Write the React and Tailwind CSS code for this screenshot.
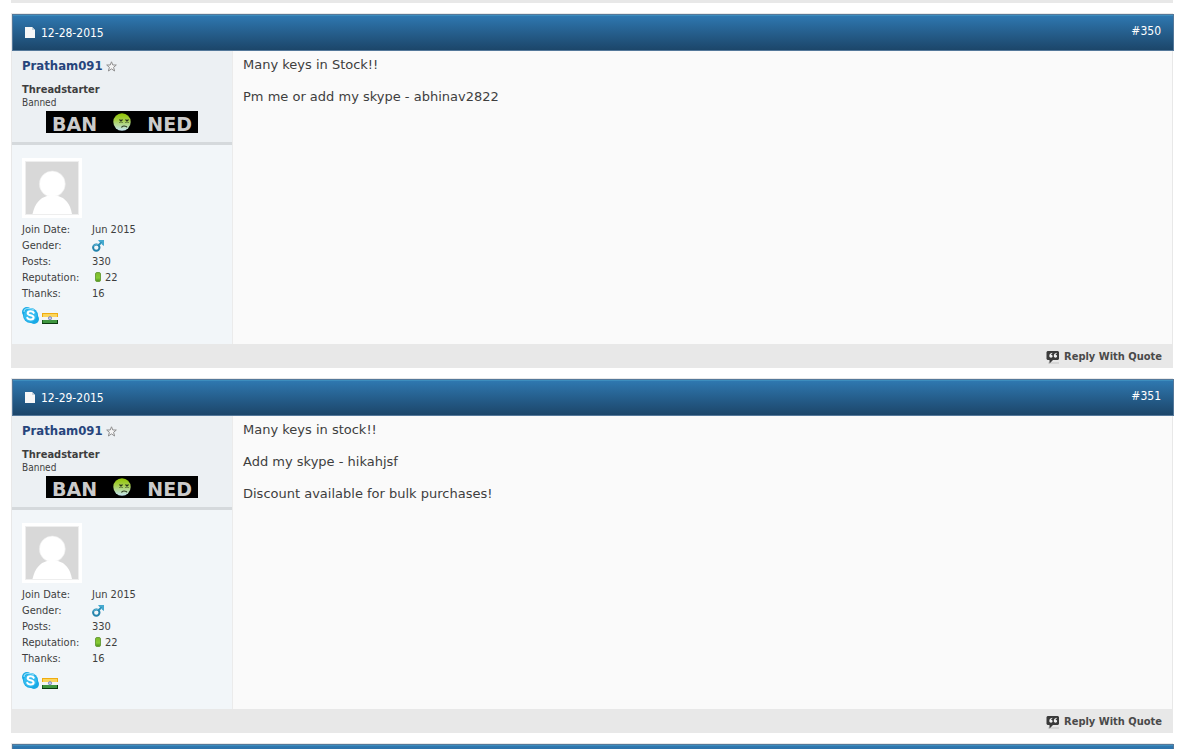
import React from "react";

const posts = [
  {
    id: 350,
    date: "12-28-2015",
    lines: ["Many keys in Stock!!", "Pm me or add my skype - abhinav2822"],
  },
  {
    id: 351,
    date: "12-29-2015",
    lines: [
      "Many keys in stock!!",
      "Add my skype - hikahjsf",
      "Discount available for bulk purchases!",
    ],
  },
];

function PageIcon() {
  return (
    <svg width="10" height="12" viewBox="0 0 10 12" aria-hidden="true">
      <path d="M0 0h7l3 3v8H0z" fill="#f7f7f7" />
      <path d="M7 0l3 3H7z" fill="#c9d3dc" />
    </svg>
  );
}

function StarIcon() {
  return (
    <svg width="11" height="11" viewBox="0 0 11 11" aria-hidden="true">
      <path
        d="M5.5 .8L6.8 4H10.3L7.6 6.3L8.6 10L5.5 7.9L2.4 10L3.4 6.3L.7 4H4.2Z"
        fill="#f4f4f4"
        stroke="#8f8f8f"
        strokeWidth="1"
      />
    </svg>
  );
}

function SickFace() {
  return (
    <svg width="18" height="18" viewBox="0 0 18 18" aria-hidden="true">
      <defs>
        <linearGradient id="sick" x1="0" y1="0" x2="0" y2="1">
          <stop offset="0" stopColor="#8fc400" />
          <stop offset=".4" stopColor="#a6cf4a" />
          <stop offset="1" stopColor="#c3e3f2" />
        </linearGradient>
      </defs>
      <circle cx="9" cy="9" r="8.7" fill="url(#sick)" />
      <path
        d="M6.500 6.500l3 3m0-3l-3 3M12.500 6.500l3 3m0-3l-3 3"
        fill="none"
        stroke="#26331a"
        strokeWidth="1.1"
      />
      <path
        d="M8.500 14.500Q9 13 11 13Q13.500 13 14 14.300"
        fill="none"
        stroke="#26331a"
        strokeWidth="1.1"
      />
    </svg>
  );
}

function Avatar() {
  return (
    <svg
      width="60"
      height="60"
      viewBox="0 0 60 60"
      role="img"
      aria-label="Avatar"
      className="block"
    >
      <rect width="60" height="60" fill="#fff" />
      <rect x="3" y="3" width="54" height="54" fill="#eee" />
      <rect x="4" y="4" width="52" height="52" fill="#d8d8d8" />
      <circle cx="30.3" cy="26" r="13" fill="#fff" stroke="#eaeaea" strokeWidth=".6" />
      <path d="M10.500 56C13 45 18 40 25 38H36C43 40 48 45 50 56Z" fill="#fff" />
    </svg>
  );
}

function MaleIcon() {
  return (
    <svg width="12" height="12" viewBox="0 0 12 12" role="img" aria-label="Male">
      <circle cx="4.3" cy="7.600" r="3.200" fill="none" stroke="#2383ab" strokeWidth="2" />
      <path d="M1.500 6.300a3.200 3.200 0 0 1 4.500-1.500" fill="none" stroke="#62bbdc" strokeWidth="1" />
      <path d="M6.500 5.300L10 1.800" stroke="#2b91ba" strokeWidth="2" />
      <path d="M6 0H12V6L9.800 4.500V2H7.500Z" fill="#46a9cf" />
    </svg>
  );
}

function ReputationPip() {
  return (
    <svg width="6" height="10" viewBox="0 0 6 10" aria-hidden="true">
      <defs>
        <linearGradient id="pip" x1="0" y1="0" x2="0" y2="1">
          <stop offset="0" stopColor="#7db82c" />
          <stop offset=".6" stopColor="#86cc35" />
          <stop offset="1" stopColor="#4c8d20" />
        </linearGradient>
      </defs>
      <rect x=".5" y=".5" width="5" height="9" rx="1.500" fill="url(#pip)" stroke="#6da13f" />
    </svg>
  );
}

function SkypeIcon() {
  return (
    <svg width="17" height="17" viewBox="0 0 17 17" aria-hidden="true">
      <circle cx="5" cy="5" r="5" fill="#19a9e5" />
      <circle cx="12" cy="12" r="5" fill="#19a9e5" />
      <circle cx="8.500" cy="8.500" r="7.500" fill="#19a9e5" />
      <circle cx="8.300" cy="8.300" r="6.500" fill="#35bcf0" />
      <path d="M2 5Q2 2 5 1.500Q9 1 12 3" fill="none" stroke="#8bdcf8" strokeWidth="1.200" />
      <path
        d="M11.700 5.800C10.800 3.800 5.700 3.700 5.700 6.300C5.700 8.900 11.600 7.500 11.600 10.500C11.600 13.200 6 13 5.300 10.800"
        fill="none"
        stroke="#fff"
        strokeWidth="2.100"
        strokeLinecap="round"
      />
    </svg>
  );
}

function IndiaFlag() {
  return (
    <svg width="16" height="11" viewBox="0 0 16 11" role="img" aria-label="India">
      <rect width="16" height="4" fill="#f0ac10" />
      <rect x="1" y="1" width="14" height="3" fill="#fbd55c" />
      <rect y="4" width="16" height="3" fill="#f4f4f4" />
      <rect y="7" width="16" height="4" fill="#1c5c1e" />
      <rect x="1" y="7" width="14" height="3" fill="#3f963f" />
      <path d="M15 7h1v4H0v-1h15z" fill="#0c3a0f" />
      <circle cx="8" cy="5.200" r="1.600" fill="#c5c9e6" stroke="#7b84bb" strokeWidth=".9" />
    </svg>
  );
}

function QuoteIcon() {
  return (
    <svg width="14" height="13" viewBox="0 0 14 13" aria-hidden="true">
      <path d="M2 11.500h11v1H2z" fill="#c4c4c4" />
      <path d="M1.500 0H12L13 1V8L12 9H7L3.500 12.500V9H1.500L.5 8V1Z" fill="#3b3b3b" />
      <path
        d="M6.300 1.700C4.300 2 3.300 3.300 3.300 5C3.300 7.200 6.600 7.200 6.600 5.300C6.600 4.300 5.900 3.900 5.100 4Q5.300 3 6.300 2.600ZM10.800 1.700C8.800 2 7.800 3.300 7.800 5C7.800 7.200 11.100 7.200 11.100 5.300C11.100 4.300 10.400 3.900 9.600 4Q9.800 3 10.800 2.600Z"
        fill="#f2f2f2"
      />
    </svg>
  );
}

function PostHeader({ post }) {
  return (
    <div className="-mr-[2px] flex h-[37px] justify-between border border-[#54789a] bg-linear-to-b from-[#2f79b2] to-[#1c466a] px-3 text-[12px] leading-[16px] text-white shadow-[inset_0_1px_0_#3d8dbd]">
      {post && (
        <>
          <div className="flex items-center gap-[6px]">
            <PageIcon />
            <span>{post.date}</span>
          </div>
          <a href={"#post" + post.id} className="pt-2">
            #{post.id}
          </a>
        </>
      )}
    </div>
  );
}

function UserInfo() {
  return (
    <div className="w-[221px] shrink-0 border-r border-[#ebebeb] bg-[#f2f6f9]">
      <div className="h-[94px] border-b-[3px] border-[#d5d9dc] bg-[#ecf0f3] px-[10px] pt-[7px]">
        <div className="flex items-center gap-[3px]">
          <a
            href="#user"
            className="text-[13px] leading-[16px] font-bold text-[#27457c]"
          >
            Pratham091
          </a>
          <StarIcon />
        </div>
        <div className="mt-[9px] text-[11px] leading-[13px] font-bold">Threadstarter</div>
        <div className="text-[10px] leading-[13px]">Banned</div>
        {/* rank banner */}
        <div className="mx-auto mt-[2px] flex h-[22px] w-[152px] items-center justify-between bg-black px-[6px] font-['DejaVu_Sans',Verdana,sans-serif] text-[19px] leading-[22px] font-bold text-[#cbcbcb]">
          <span className="pt-1">BAN</span>
          <SickFace />
          <span className="pt-1">NED</span>
        </div>
      </div>

      <div className="px-[10px] pt-[13px] pb-[19px]">
        <a href="#user" className="block w-[60px]">
          <Avatar />
        </a>
        <dl className="mt-1 grid grid-cols-[70px_1fr] text-[11px] leading-[16px]">
          <dt>Join Date:</dt>
          <dd>Jun 2015</dd>
          <dt>Gender:</dt>
          <dd className="flex items-center">
            <MaleIcon />
          </dd>
          <dt>Posts:</dt>
          <dd>330</dd>
          <dt>Reputation:</dt>
          <dd className="flex items-start gap-1 pl-[3px]">
            <span className="pt-[2px]">
              <ReputationPip />
            </span>
            22
          </dd>
          <dt>Thanks:</dt>
          <dd>16</dd>
        </dl>
        <div className="mt-[5px] flex items-end gap-[3px]">
          <a href="#skype" aria-label="Skype">
            <SkypeIcon />
          </a>
          <IndiaFlag />
        </div>
      </div>
    </div>
  );
}

function Post({ post }) {
  return (
    <li className="border border-b-0 border-[#e8e8e8] bg-[#fafafa]">
      <PostHeader post={post} />
      <div className="flex min-h-[293px]">
        <UserInfo />
        <div className="flex flex-1 flex-col gap-4 px-[10px] pt-[6px] font-['DejaVu_Sans',Verdana,sans-serif] text-[13px] leading-[16px]">
          {post.lines.map((line) => (
            <p key={line}>{line}</p>
          ))}
        </div>
      </div>
      <div className="flex h-6 items-end justify-end bg-[#e8e8e8] px-[10px] pb-[3px]">
        <a
          href="#reply"
          className="flex items-center gap-1 text-[11px] leading-[16px] font-bold text-[#4a4a4a]"
        >
          <QuoteIcon />
          Reply With Quote
        </a>
      </div>
    </li>
  );
}

export default function App() {
  return (
    <div className="h-screen overflow-hidden bg-white pr-3 pl-[11px] font-['DejaVu_Sans_Condensed','DejaVu_Sans',Tahoma,sans-serif] text-[#3e3e3e] [&_svg]:block [&_svg]:shrink-0">
      <div className="mb-[10px] h-[3px] bg-[#e8e8e8]" />
      <ol className="flex flex-col gap-[10px]">
        {posts.map((post) => (
          <Post key={post.id} post={post} />
        ))}
        <li className="border border-[#e8e8e8]">
          <PostHeader />
        </li>
      </ol>
    </div>
  );
}
